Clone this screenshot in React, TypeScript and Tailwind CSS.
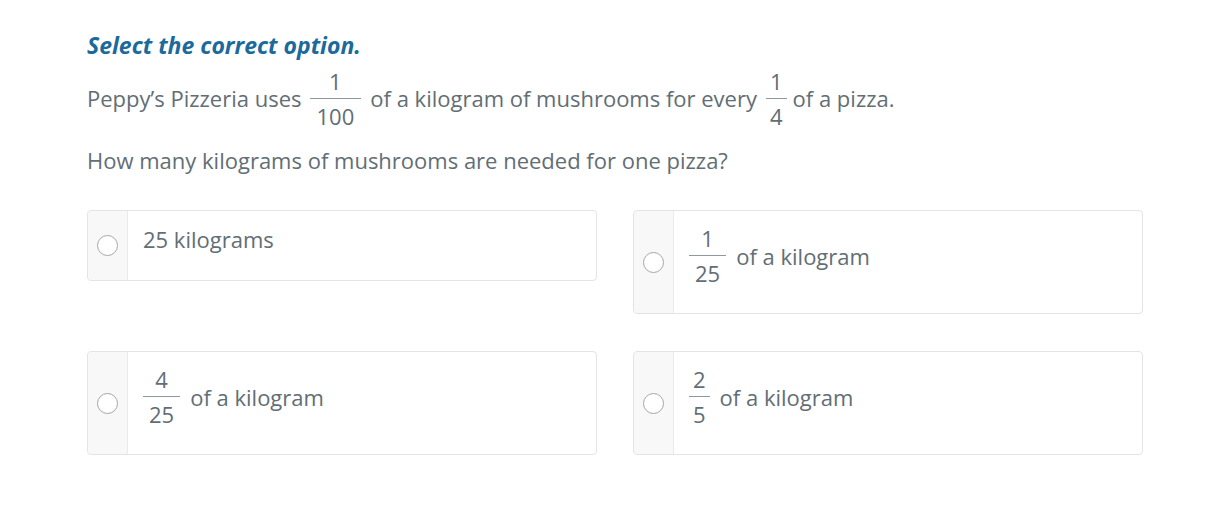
import React from "react";

const font = { fontFamily: '"Open Sans", "Liberation Sans", sans-serif' };

function Frac({ n, d, pad, cls }: { n: string; d: string; pad: string; cls: string }) {
  return (
    <span className={`inline-flex flex-col items-center ${cls}`}>
      <span className="leading-[34px]">{n}</span>
      <span className="h-px w-full bg-[#8f989e]" />
      <span className={`leading-[34px] ${pad}`}>{d}</span>
    </span>
  );
}

function Option({ children }: { children: React.ReactNode }) {
  return (
    <div className="flex items-stretch rounded-[4px] border border-[#e4e4e4] bg-white">
      <div className="flex w-[40px] shrink-0 items-center justify-center rounded-l-[4px] border-r border-[#eaeaea] bg-[#f8f8f8]">
        <span className="block h-[21px] w-[21px] rounded-full border border-[#a6a6a6] bg-white" />
      </div>
      <div className="flex items-center pb-[23px] pl-[15px] pt-[10px] text-[22px] leading-[36px] text-[#626e75]">
        {children}
      </div>
    </div>
  );
}

export default function App() {
  return (
    <div className="min-h-[511px] w-[1224px] bg-white" style={font}>
      <div className="w-[1143px] pl-[87px] pt-[30px]">
        <h1 className="text-[23px] font-bold italic leading-[30px] text-[#1b6a9b]">Select the correct option.</h1>
        <p className="mt-[4px] flex items-center text-[22px] text-[#626e75]">
          <span>Peppy’s Pizzeria uses</span>
          <Frac n="1" d="100" pad="px-[7px]" cls="ml-[8px] mr-[9px]" />
          <span>of a kilogram of mushrooms for every</span>
          <Frac n="1" d="4" pad="px-[4px]" cls="ml-[9px] mr-[6px]" />
          <span>of a pizza.</span>
        </p>
        <p className="mt-[12px] text-[22px] leading-[30px] text-[#626e75]">How many kilograms of mushrooms are needed for one pizza?</p>
        <div className="mt-[35px] grid grid-cols-2 items-start gap-x-[36px] gap-y-[37px]">
          <Option>
            <span>25 kilograms</span>
          </Option>
          <Option>
            <Frac n="1" d="25" pad="px-[6px]" cls="mr-[10px]" />
            <span>of a kilogram</span>
          </Option>
          <Option>
            <Frac n="4" d="25" pad="px-[6px]" cls="mr-[10px]" />
            <span>of a kilogram</span>
          </Option>
          <Option>
            <Frac n="2" d="5" pad="px-[4px]" cls="mr-[10px]" />
            <span>of a kilogram</span>
          </Option>
        </div>
      </div>
    </div>
  );
}
